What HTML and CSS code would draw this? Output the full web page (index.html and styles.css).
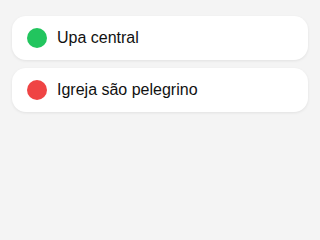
FILE: index.html
```html
<!DOCTYPE html>
<html>
<head>
<meta charset="utf-8">
<link rel="stylesheet" href="styles.css">
</head>
<body>
<div class="list">
  <div class="card"><span class="dot green"></span><span class="label">Upa central</span></div>
  <div class="card"><span class="dot red"></span><span class="label">Igreja são pelegrino</span></div>
</div>
</body>
</html>
```
FILE: styles.css
```css
html, body { margin: 0; padding: 0; }
body {
  background: #f4f4f4;
  font-family: "Liberation Sans", Arial, sans-serif;
  width: 320px;
  height: 240px;
}
.list {
  padding: 16px 12px;
  display: flex;
  flex-direction: column;
  gap: 8px;
}
.card {
  height: 44px;
  box-sizing: border-box;
  background: #fff;
  border-radius: 14px;
  box-shadow: 0 1px 3px rgba(0,0,0,0.08);
  display: flex;
  align-items: center;
  padding: 0 15px;
  gap: 10px;
}
.dot {
  width: 20px;
  height: 20px;
  border-radius: 50%;
  flex: none;
}
.green { background: #22c55e; }
.red { background: #ef4444; }
.label {
  font-size: 16px;
  color: #111;
}
```
